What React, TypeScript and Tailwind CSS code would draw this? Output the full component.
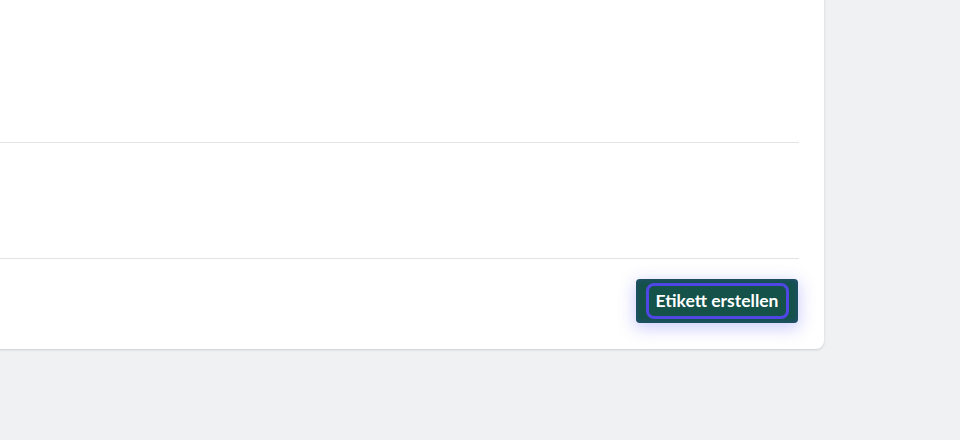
export default function App() {
  return (
    <div className="h-[440px] w-[960px] overflow-hidden bg-[#f0f1f3] font-['Lato',sans-serif]">
      <div className="-ml-6 -mt-6 w-[848px] rounded-lg bg-white shadow-[0_1px_3px_rgba(0,0,0,0.1),0_1px_2px_rgba(0,0,0,0.06)]">
        <div className="h-[166px]" />
        <div className="ml-6 mr-[25px] border-t border-[#e2e3e7]" />
        <div className="h-[115px]" />
        <div className="ml-6 mr-[25px] border-t border-[#e2e3e7]" />
        <div className="flex justify-end pb-[26px] pl-6 pr-[26px] pt-5">
          <button
            type="button"
            className="flex h-[44px] w-[162px] items-center justify-center rounded-[4px] bg-[#14524a] shadow-[0_4px_16px_2px_rgba(99,102,241,0.3),inset_0_0_6px_rgba(79,70,229,0.35)]"
          >
            <span className="flex h-[36px] w-[143px] items-center justify-center rounded-[8px] border-[3px] border-[#4f46e5] text-[17.5px] font-bold text-white">
              Etikett erstellen
            </span>
          </button>
        </div>
      </div>
    </div>
  );
}
